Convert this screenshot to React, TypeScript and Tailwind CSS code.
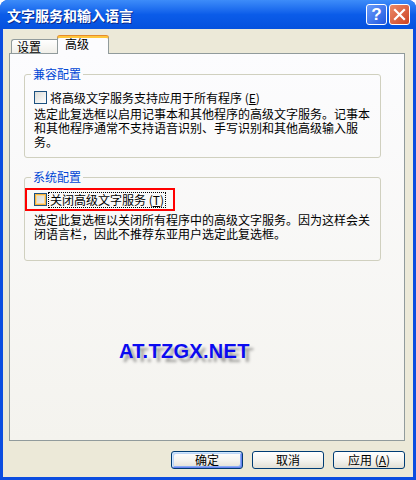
import React from 'react';

const Checkbox: React.FC<{ hot?: boolean }> = ({ hot }) => (
  <span
    className={
      hot
        ? 'block shrink-0 w-[13px] h-[13px] border border-[#1c5180] bg-linear-to-br from-[#d6d6d0] to-[#f4f4f0] shadow-[inset_0_0_0_1px_#f8b33a,inset_0_0_0_2px_#fcd895]'
        : 'block shrink-0 w-[13px] h-[13px] border border-[#1c5180] bg-linear-to-br from-[#dcdcd7] to-white'
    }
  />
);

const Button: React.FC<{ primary?: boolean; children: React.ReactNode }> = ({ primary, children }) => (
  <div
    className={
      'w-[72px] h-[18px] flex items-center justify-center rounded-[3px] border border-[#003c74] bg-linear-to-b from-white via-[#f5f4f0] to-[#e2dfd5] leading-none ' +
      (primary
        ? 'shadow-[inset_1px_1px_0_#cee7ff,inset_-1px_-1px_0_#6982ee,inset_2px_2px_0_#bcd4f6,inset_-2px_-2px_0_#89adf6]'
        : '')
    }
  >
    {children}
  </div>
);

export default function App() {
  return (
    <div className="w-[416px] h-[480px] flex flex-col bg-[#0b4de0] rounded-t-[8px] font-['Noto_Sans_CJK_SC',sans-serif] text-[12px] text-black">
      {/* title bar */}
      <div className="h-[29px] shrink-0 flex items-center pl-[7px] pr-[6px] rounded-t-[8px] bg-linear-to-b from-[#3d8cf9] via-[#0b5ce9] to-[#0551de]">
        <span className="text-white font-bold text-[14px] leading-none [text-shadow:1px_1px_0_#0a2a8a]">
          文字服务和输入语言
        </span>
        <div className="ml-auto flex gap-[2px]">
          <div className="w-[21px] h-[21px] rounded-[3px] border border-white flex items-center justify-center bg-linear-to-br from-[#6a9cfb] to-[#2256df]">
            <span className="text-white font-bold text-[17px] leading-none font-['Liberation_Sans',sans-serif]">?</span>
          </div>
          <div className="w-[21px] h-[21px] rounded-[3px] border border-white flex items-center justify-center bg-linear-to-br from-[#eb8a68] to-[#cc4020]">
            <svg width="13" height="13" viewBox="0 0 13 13">
              <path d="M2 2 L11 11 M11 2 L2 11" stroke="white" strokeWidth="2.2" strokeLinecap="square" />
            </svg>
          </div>
        </div>
      </div>

      {/* body */}
      <div className="flex-1 mx-[3px] mb-[3px] bg-[#ece9d8] flex flex-col pl-[6px] pt-[6px]">
        {/* tabs */}
        <div className="flex items-end h-[18px] relative z-10 pl-[2px]">
          <div className="h-[14px] w-[46px] pl-[5px] pt-[1px] leading-[12px] border-t border-l border-[#919b9c] rounded-tl-[3px] bg-linear-to-b from-white to-[#f0efe9]">
            设置
          </div>
          <div className="h-[18px] w-[52px] -mb-px pl-[7px] leading-[12px] border-t-2 border-t-[#ffc73c] border-x border-x-[#919b9c] rounded-t-[3px] bg-[#fcfcfe] shadow-[0_-1px_0_#e68b2c]">
            高级
          </div>
        </div>

        {/* tab page */}
        <div className="w-[396px] h-[388px] border border-[#919b9c] bg-linear-to-b from-[#fcfcfe] to-[#f4f3ee] pl-[14px] pt-[13px]">
          <fieldset className="w-[357px] border border-[#d0d0bf] rounded-[3px] pl-[9px] pt-[10px] pb-[8px]">
            <legend className="-ml-[3px] px-[2px] text-[#0046d5] leading-[14px]">兼容配置</legend>
            <div className="flex items-center h-[13px]">
              <Checkbox />
              <span className="ml-[3px] leading-[13px] whitespace-nowrap">
                将高级文字服务支持应用于所有程序 (<span className="underline">E</span>)
              </span>
            </div>
            <p className="mt-[3px] leading-[14px] whitespace-nowrap">
              选定此复选框以启用记事本和其他程序的高级文字服务。记事本
              <br />
              和其他程序通常不支持语音识别、手写识别和其他高级输入服
              <br />
              务。
            </p>
          </fieldset>

          <fieldset className="mt-[12px] w-[357px] border border-[#d0d0bf] rounded-[3px] pl-[9px] pt-[4px] pb-[19px]">
            <legend className="-ml-[3px] px-[2px] text-[#0046d5] leading-[14px]">系统配置</legend>
            <div className="-ml-[9px] w-[150px] h-[23px] border-2 border-[#ff0000] pl-[7px] flex items-center">
              <Checkbox hot />
              <span className="ml-[1px] px-[1px] border border-dotted border-black leading-[14px] whitespace-nowrap">
                关闭高级文字服务 (<span className="underline">T</span>)
              </span>
            </div>
            <p className="mt-[2px] leading-[14px] whitespace-nowrap">
              选定此复选框以关闭所有程序中的高级文字服务。因为这样会关
              <br />
              闭语言栏，因此不推荐东亚用户选定此复选框。
            </p>
          </fieldset>

          <div className="mt-[79px] ml-[95px] font-['Liberation_Sans',sans-serif] font-bold text-[20px] leading-[23px] text-[#0b0bf0] tracking-[0.3px] [text-shadow:4px_4px_3px_rgba(0,0,0,0.35)]">
            AT.TZGX.NET
          </div>
        </div>

        {/* buttons */}
        <div className="mt-[10px] w-[396px] flex justify-end gap-[9px]">
          <Button primary>确定</Button>
          <Button>取消</Button>
          <Button>
            应用 (<span className="underline">A</span>)
          </Button>
        </div>
      </div>
    </div>
  );
}
